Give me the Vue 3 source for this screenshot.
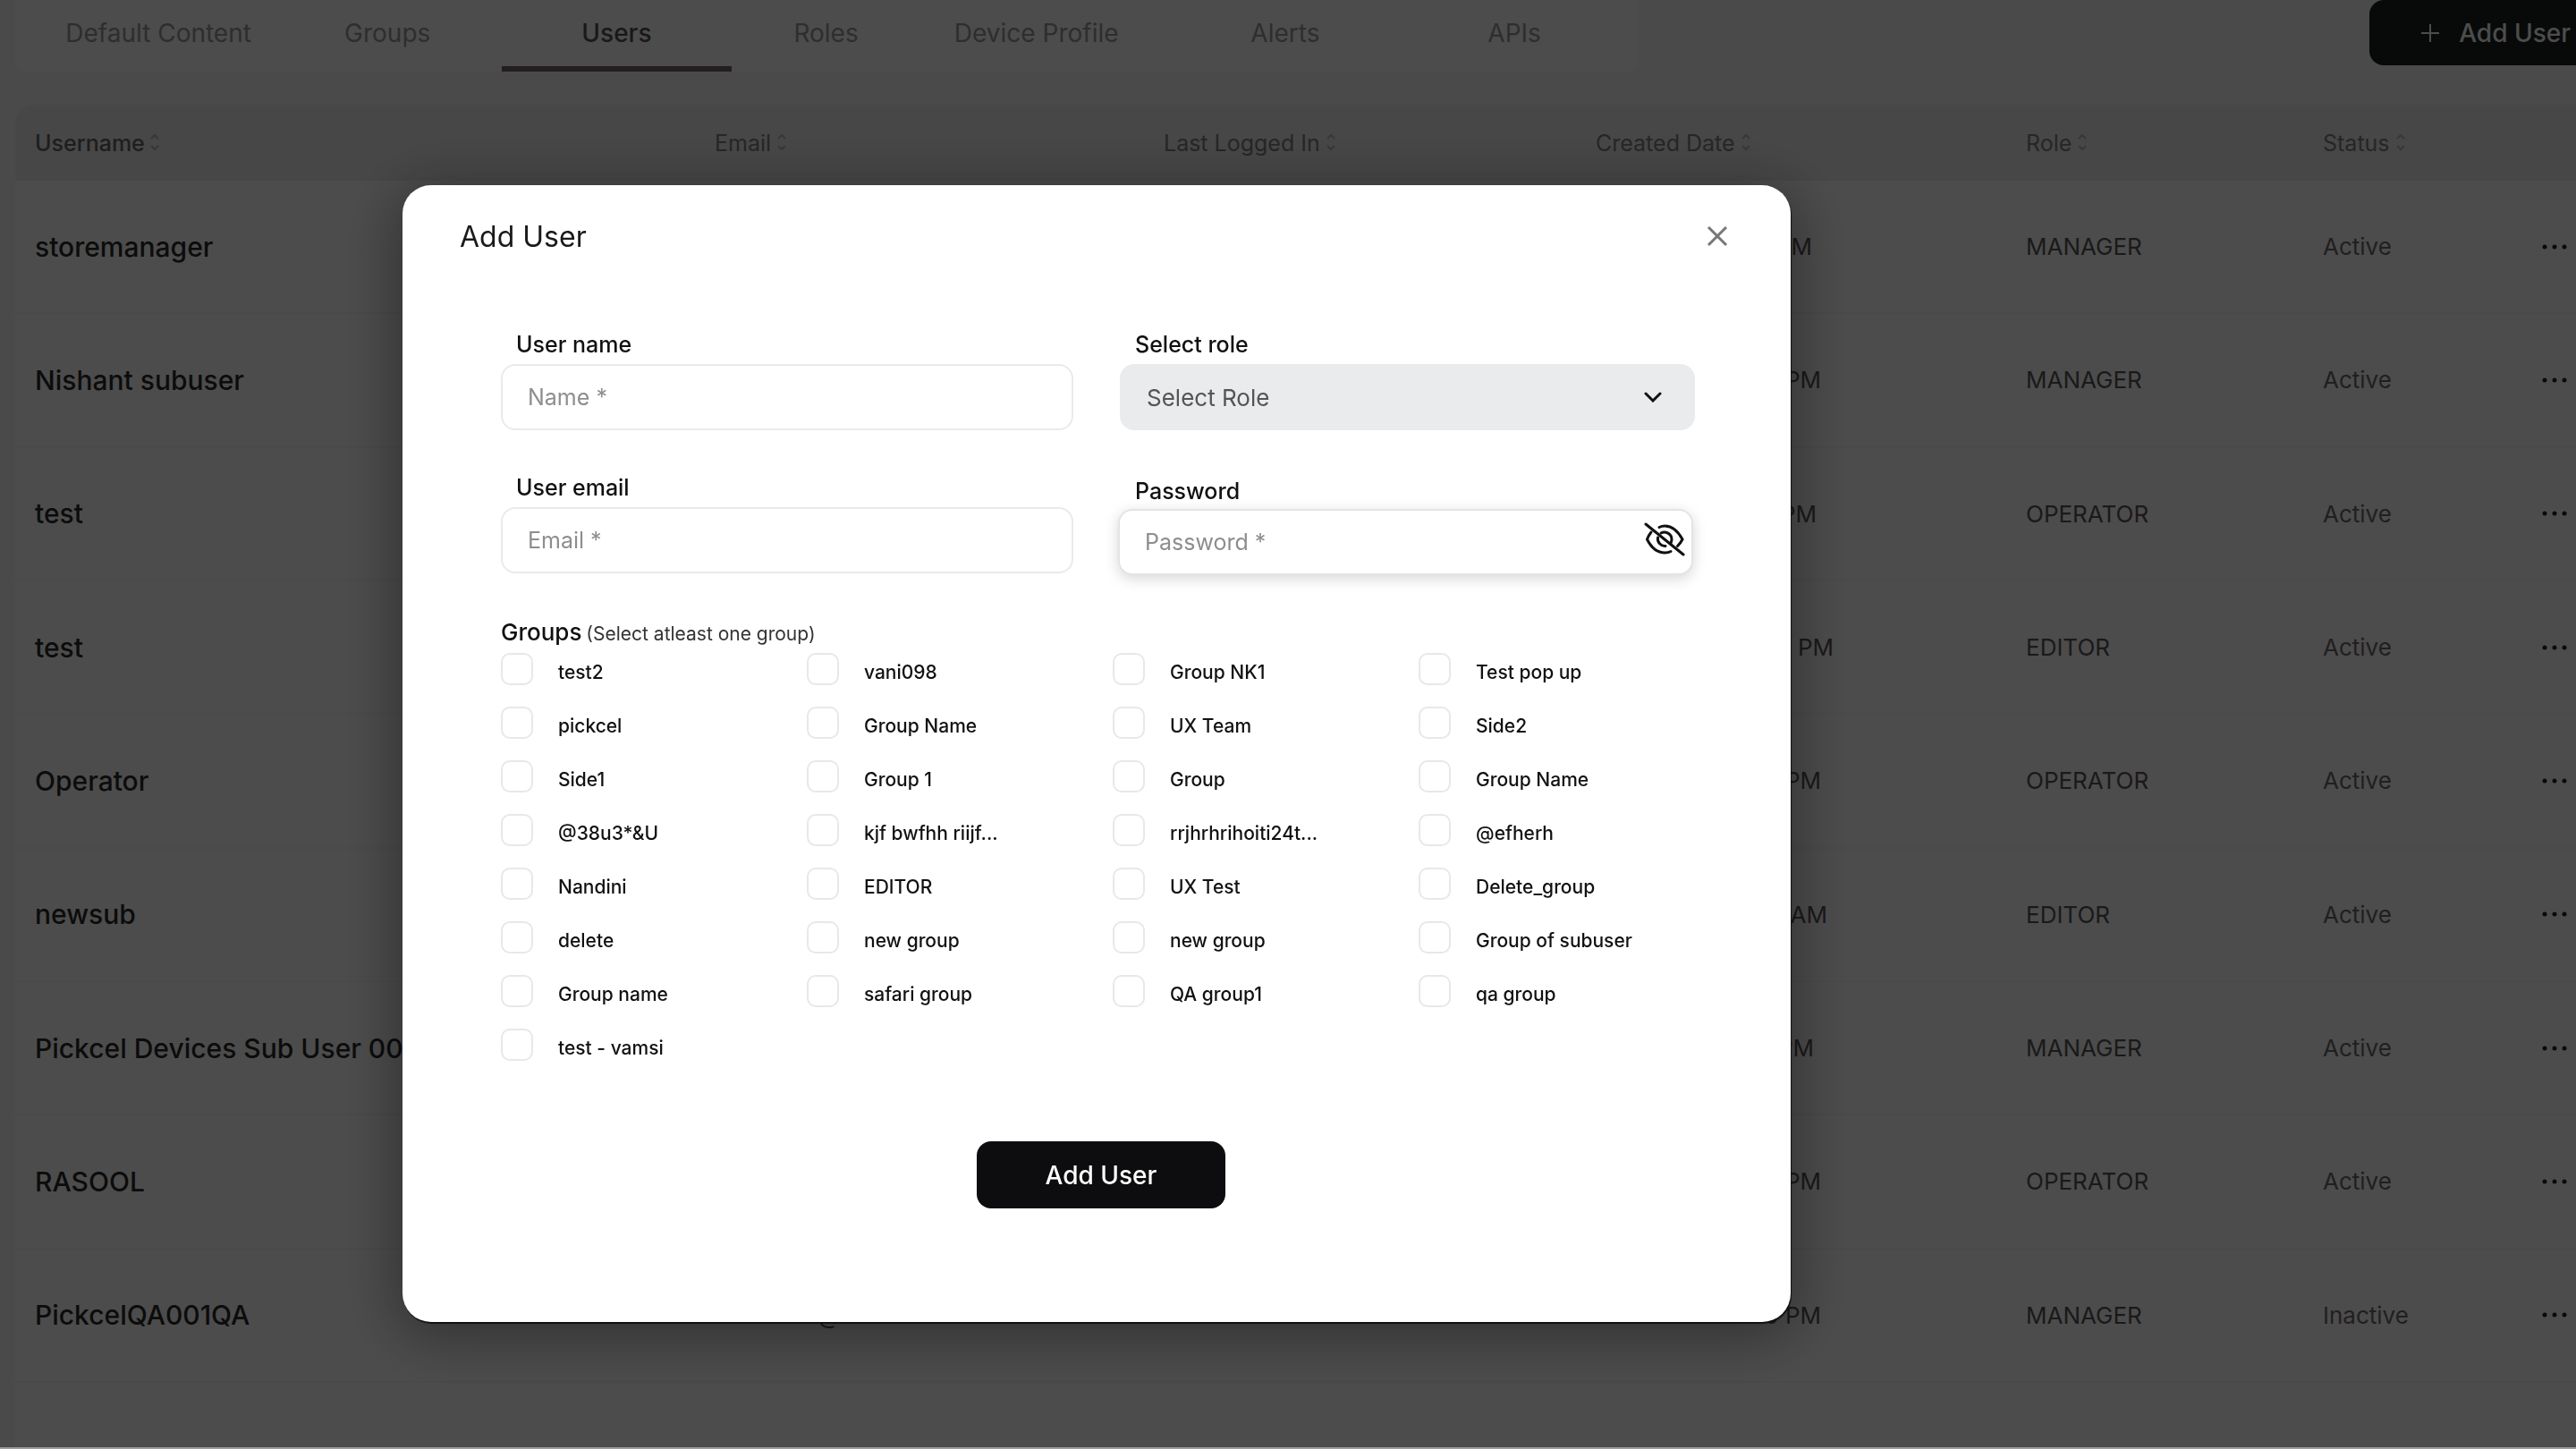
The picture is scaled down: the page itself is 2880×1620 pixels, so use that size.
<script setup>
import { ref } from 'vue'

const tabs = ['Default Content', 'Groups', 'Users', 'Roles', 'Device Profile', 'Alerts', 'APIs']
const activeTab = ref('Users')

const columns = ['Username', 'Email', 'Last Logged In', 'Created Date', 'Role', 'Status']

const users = [
  { name: 'storemanager', created: 'PM', createdWidth: 242, role: 'MANAGER', status: 'Active' },
  { name: 'Nishant subuser', created: 'PM', createdWidth: 252, role: 'MANAGER', status: 'Active' },
  { name: 'test', created: 'PM', createdWidth: 247, role: 'OPERATOR', status: 'Active' },
  { name: 'test', created: '5 PM', createdWidth: 266, role: 'EDITOR', status: 'Active' },
  { name: 'Operator', created: 'PM', createdWidth: 252, role: 'OPERATOR', status: 'Active' },
  { name: 'newsub', created: 'AM', createdWidth: 259, role: 'EDITOR', status: 'Active' },
  { name: 'Pickcel Devices Sub User 003', created: 'PM', createdWidth: 244, role: 'MANAGER', status: 'Active' },
  { name: 'RASOOL', created: 'PM', createdWidth: 252, role: 'OPERATOR', status: 'Active' },
  { name: 'PickcelQA001QA', email: '@', created: '0 PM', createdWidth: 252, role: 'MANAGER', status: 'Inactive' },
]

const groups = [
  'test2', 'vani098', 'Group NK1', 'Test pop up',
  'pickcel', 'Group Name', 'UX Team', 'Side2',
  'Side1', 'Group 1', 'Group', 'Group Name',
  '@38u3*&U', 'kjf bwfhh riijf...', 'rrjhrhrihoiti24t...', '@efherh',
  'Nandini', 'EDITOR', 'UX Test', 'Delete_group',
  'delete', 'new group', 'new group', 'Group of subuser',
  'Group name', 'safari group', 'QA group1', 'qa group',
  'test - vamsi',
]

const form = ref({ name: '', role: '', email: '', password: '', groups: [] })
</script>

<template>
  <div class="page">
    <header class="topbar">
      <nav class="tabs">
        <a v-for="tab in tabs" :key="tab" href="#" class="tab" :class="{ active: tab === activeTab }">{{ tab }}</a>
      </nav>
      <button type="button" class="new-user">
        <svg width="22" height="22" viewBox="0 0 22 22" aria-hidden="true">
          <path d="M11 1v20M1 11h20" stroke="currentColor" stroke-width="2" fill="none" />
        </svg>
        Add User
      </button>
    </header>

    <main class="panel">
      <table class="users">
        <colgroup>
          <col class="c-name" /><col class="c-email" /><col class="c-login" /><col class="c-created" />
          <col class="c-role" /><col class="c-status" /><col class="c-menu" />
        </colgroup>
        <thead>
          <tr>
            <th v-for="col in columns" :key="col" :class="{ sorted: col === 'Username' }">
              {{ col }}
              <svg class="sort" width="10" height="20" viewBox="0 0 10 20" aria-hidden="true">
                <path d="M1 6l4-4 4 4M1 14l4 4 4-4" fill="none" stroke="currentColor" stroke-width="2" />
              </svg>
            </th>
            <th></th>
          </tr>
        </thead>
        <tbody>
          <tr v-for="(user, i) in users" :key="i">
            <td class="name">{{ user.name }}</td>
            <td><span v-if="user.email" class="email">{{ user.email }}</span></td>
            <td></td>
            <td><span class="date" :style="{ width: user.createdWidth + 'px' }">{{ user.created }}</span></td>
            <td class="role">{{ user.role }}</td>
            <td class="status">{{ user.status }}</td>
            <td class="menu">
              <button type="button" class="dots" aria-label="More actions">
                <svg width="28" height="6" viewBox="0 0 28 6" aria-hidden="true">
                  <circle cx="3" cy="3" r="2.500" /><circle cx="14" cy="3" r="2.500" /><circle cx="25" cy="3" r="2.500" />
                </svg>
              </button>
            </td>
          </tr>
        </tbody>
      </table>
    </main>
    <div class="page-edge"></div>
  </div>

  <div class="overlay">
    <section class="modal" role="dialog" aria-labelledby="dialog-title">
      <div class="modal-head">
        <h2 id="dialog-title">Add User</h2>
        <button type="button" class="close" aria-label="Close">
          <svg width="24" height="24" viewBox="0 0 24 24" aria-hidden="true">
            <path d="M2 2l20 20M22 2L2 22" stroke="currentColor" stroke-width="3" fill="none" />
          </svg>
        </button>
      </div>

      <form class="form" @submit.prevent>
        <div class="fields">
          <div class="field">
            <label for="name">User name</label>
            <input id="name" v-model="form.name" type="text" placeholder="Name *" />
          </div>
          <div class="field">
            <label for="role">Select role</label>
            <div class="select-box">
              <select id="role" v-model="form.role">
                <option value="">Select Role</option>
              </select>
              <svg class="chevron" width="20" height="12" viewBox="0 0 20 12" aria-hidden="true">
                <path d="M2 2l8 8 8-8" fill="none" stroke="currentColor" stroke-width="3" stroke-linecap="round" />
              </svg>
            </div>
          </div>
          <div class="field">
            <label for="email">User email</label>
            <input id="email" v-model="form.email" type="text" placeholder="Email *" />
          </div>
          <div class="field password">
            <label for="password">Password</label>
            <div class="password-box">
              <input id="password" v-model="form.password" type="password" placeholder="Password *" />
              <button type="button" class="reveal" aria-label="Show password">
                <svg width="46" height="38" viewBox="0 0 46 38" fill="none" stroke="currentColor" stroke-width="3" stroke-linecap="round" aria-hidden="true">
                  <path d="M17 5.500C19 4.500 21 4 23.500 4C32 4 38 10 43 19C41.500 22 39.500 24.500 37.500 26.500" />
                  <path d="M8 11C6 13.500 4.500 16 3.500 19C8 28 14.500 34 23.500 34C26 34 28 33.500 30 32.500" />
                  <path d="M19 12C24 9 31 13 31 19C31 20.500 30.500 22 30 23" />
                  <path d="M15.500 17C14.500 22 19 27 24 26.500" />
                  <path d="M2 2L44 36" />
                </svg>
              </button>
            </div>
          </div>
        </div>

        <fieldset class="groups">
          <legend>Groups <small>(Select atleast one group)</small></legend>
          <div class="group-grid">
            <label v-for="(group, i) in groups" :key="i" class="group">
              <input v-model="form.groups" type="checkbox" :value="i" />
              <span>{{ group }}</span>
            </label>
          </div>
        </fieldset>

        <button type="submit" class="submit">Add User</button>
      </form>
    </section>
  </div>
</template>

<style>
body {
  margin: 0;
  background: #fafafa;
}
</style>

<style scoped>
.page,
.overlay {
  font-family: Inter, "Liberation Sans", sans-serif;
  box-sizing: border-box;
}

.page *,
.overlay * {
  box-sizing: border-box;
}

button,
input,
select {
  font-family: inherit;
}

.page {
  height: 100vh;
  display: flex;
  flex-direction: column;
  overflow: hidden;
  background: #f8f8f8;
}

.topbar {
  display: flex;
  justify-content: space-between;
  align-items: flex-start;
  padding-left: 17px;
  margin-bottom: 37px;
}

.tabs {
  width: 63.4%;
  height: 80px;
  display: grid;
  grid-template-columns: 256fr 256fr 256fr 212fr 258fr 298fr 214fr;
  padding: 0 32px;
  background: #fff;
  border-radius: 0 0 12px 12px;
}

.tab {
  display: flex;
  align-items: center;
  justify-content: center;
  border-bottom: 6px solid transparent;
  color: #999;
  font-size: 28px;
  text-decoration: none;
}

.tab.active {
  color: #5a5255;
  border-bottom-color: #75676b;
  font-weight: 500;
}

.new-user {
  height: 73px;
  display: flex;
  align-items: center;
  gap: 21px;
  padding: 0 6px 0 57px;
  border: 0;
  border-radius: 16px 0 0 16px;
  background: #1d2120;
  color: #fff;
  font-size: 28px;
  font-weight: 500;
}

.panel {
  flex: 1;
  margin-left: 17px;
  background: #fff;
  border-radius: 20px 0 0 0;
  overflow: hidden;
}

.users {
  width: 100%;
  height: 1429px;
  table-layout: fixed;
  border-collapse: separate;
  border-spacing: 0;
}

.c-name { width: 760px; }
.c-email { width: 502px; }
.c-login { width: 483px; }
.c-created { width: 481px; }
.c-role { width: 332px; }
.c-status { width: 245px; }

.users th {
  height: 85px;
  padding: 0 0 0 22px;
  background: #eee;
  color: #808080;
  font-size: 25px;
  font-weight: 400;
  text-align: left;
  white-space: nowrap;
}

.users th.sorted {
  color: #666;
  font-weight: 500;
}

.sort {
  color: #b8b8b8;
}

.users td {
  height: 149px;
  padding: 0 0 0 22px;
  border-bottom: 2px solid #f7f7f7;
  color: #5c5558;
  font-size: 26px;
  white-space: nowrap;
}

.users td.name {
  color: #2a2a2a;
  font-size: 30px;
  font-weight: 500;
}

.users td.status {
  color: #6e6a6b;
}

.date,
.email {
  display: block;
  text-align: right;
}

.email {
  width: 140px;
}

.dots {
  display: block;
  padding: 0;
  border: 0;
  background: none;
  fill: #222;
}

.dots svg {
  display: block;
}

.page-edge {
  position: relative;
  z-index: 2;
  height: 2px;
  flex: none;
  background: #9b9b9b;
}

.overlay {
  position: fixed;
  inset: 0 0 2px 0;
  display: grid;
  grid-template-columns: minmax(0, 450fr) minmax(0, 1552fr) minmax(0, 878fr);
  align-items: start;
  padding-top: 207px;
  background: rgba(0, 0, 0, 0.7);
}

.modal {
  grid-column: 2;
  padding-bottom: 127px;
  background: #fff;
  border-radius: 32px;
  box-shadow: 1px 2px 1px #111, 0 10px 64px 8px rgba(0, 0, 0, 0.35);
}

.modal-head {
  display: flex;
  justify-content: space-between;
  align-items: center;
  height: 114px;
  padding: 0 70px 0 64px;
}

.modal-head h2 {
  margin: 0;
  color: #1a1a1a;
  font-size: 32px;
  font-weight: 400;
}

.close {
  display: flex;
  padding: 0;
  border: 0;
  background: none;
  color: #777;
}

.form {
  display: flex;
  flex-direction: column;
  padding: 48px 100px 0 110px;
}

.fields {
  display: grid;
  grid-template-columns: 640fr 643fr;
  column-gap: 52px;
  row-gap: 48px;
  padding-right: 7px;
}

.field {
  display: flex;
  flex-direction: column;
}

.field > label {
  height: 38px;
  padding-left: 17px;
  color: #111;
  font-size: 25px;
  font-weight: 500;
  line-height: 32px;
}

.field input,
.field select {
  display: block;
  width: 100%;
  height: 74px;
  padding: 0 28px;
  border: 2px solid #eaeaea;
  border-radius: 16px;
  background: #fff;
  color: #333;
  font-size: 25px;
  outline: 0;
}

.field input::placeholder {
  color: #8e8e8e;
  opacity: 1;
}

.select-box {
  position: relative;
}

.field select {
  appearance: none;
  border-color: #eaebed;
  background: #eaebed;
  color: #555;
  font-size: 26px;
}

.chevron {
  position: absolute;
  right: 37px;
  top: 31px;
  color: #111;
  pointer-events: none;
}

.password {
  padding-top: 4px;
  margin-right: 2px;
  margin-left: -2px;
}

.password > label {
  height: 36px;
  padding-left: 19px;
}

.password-box {
  position: relative;
}

.password-box input {
  border-color: #e4e4e4;
  box-shadow: 0 4px 16px rgba(0, 0, 0, 0.16);
}

.reveal {
  position: absolute;
  right: 9px;
  top: 15px;
  display: flex;
  padding: 0;
  border: 0;
  background: none;
  color: #111;
}

.groups {
  margin: 44px 0 0;
  padding: 0;
  border: 0;
  min-width: 0;
}

.groups legend {
  height: 43px;
  padding: 0;
  color: #111;
  font-size: 26px;
  font-weight: 500;
  line-height: 40px;
}

.groups small {
  margin-left: -2px;
  font-size: 21px;
  font-weight: 400;
  color: #333;
}

.group-grid {
  display: grid;
  grid-template-columns: repeat(4, 342px);
}

.group {
  display: flex;
  align-items: flex-start;
  gap: 28px;
  height: 60px;
  color: #111;
  font-size: 21px;
  font-weight: 500;
  line-height: 44px;
  white-space: nowrap;
}

.group input {
  appearance: none;
  width: 36px;
  height: 36px;
  margin: 0;
  border: 2px solid #e8e8e8;
  border-radius: 10px;
  background: #fff;
}

.submit {
  align-self: center;
  width: 278px;
  height: 75px;
  margin-top: 66px;
  border: 0;
  border-radius: 16px;
  background: #0d0c0e;
  color: #fff;
  font-size: 28px;
  font-weight: 500;
}
</style>
